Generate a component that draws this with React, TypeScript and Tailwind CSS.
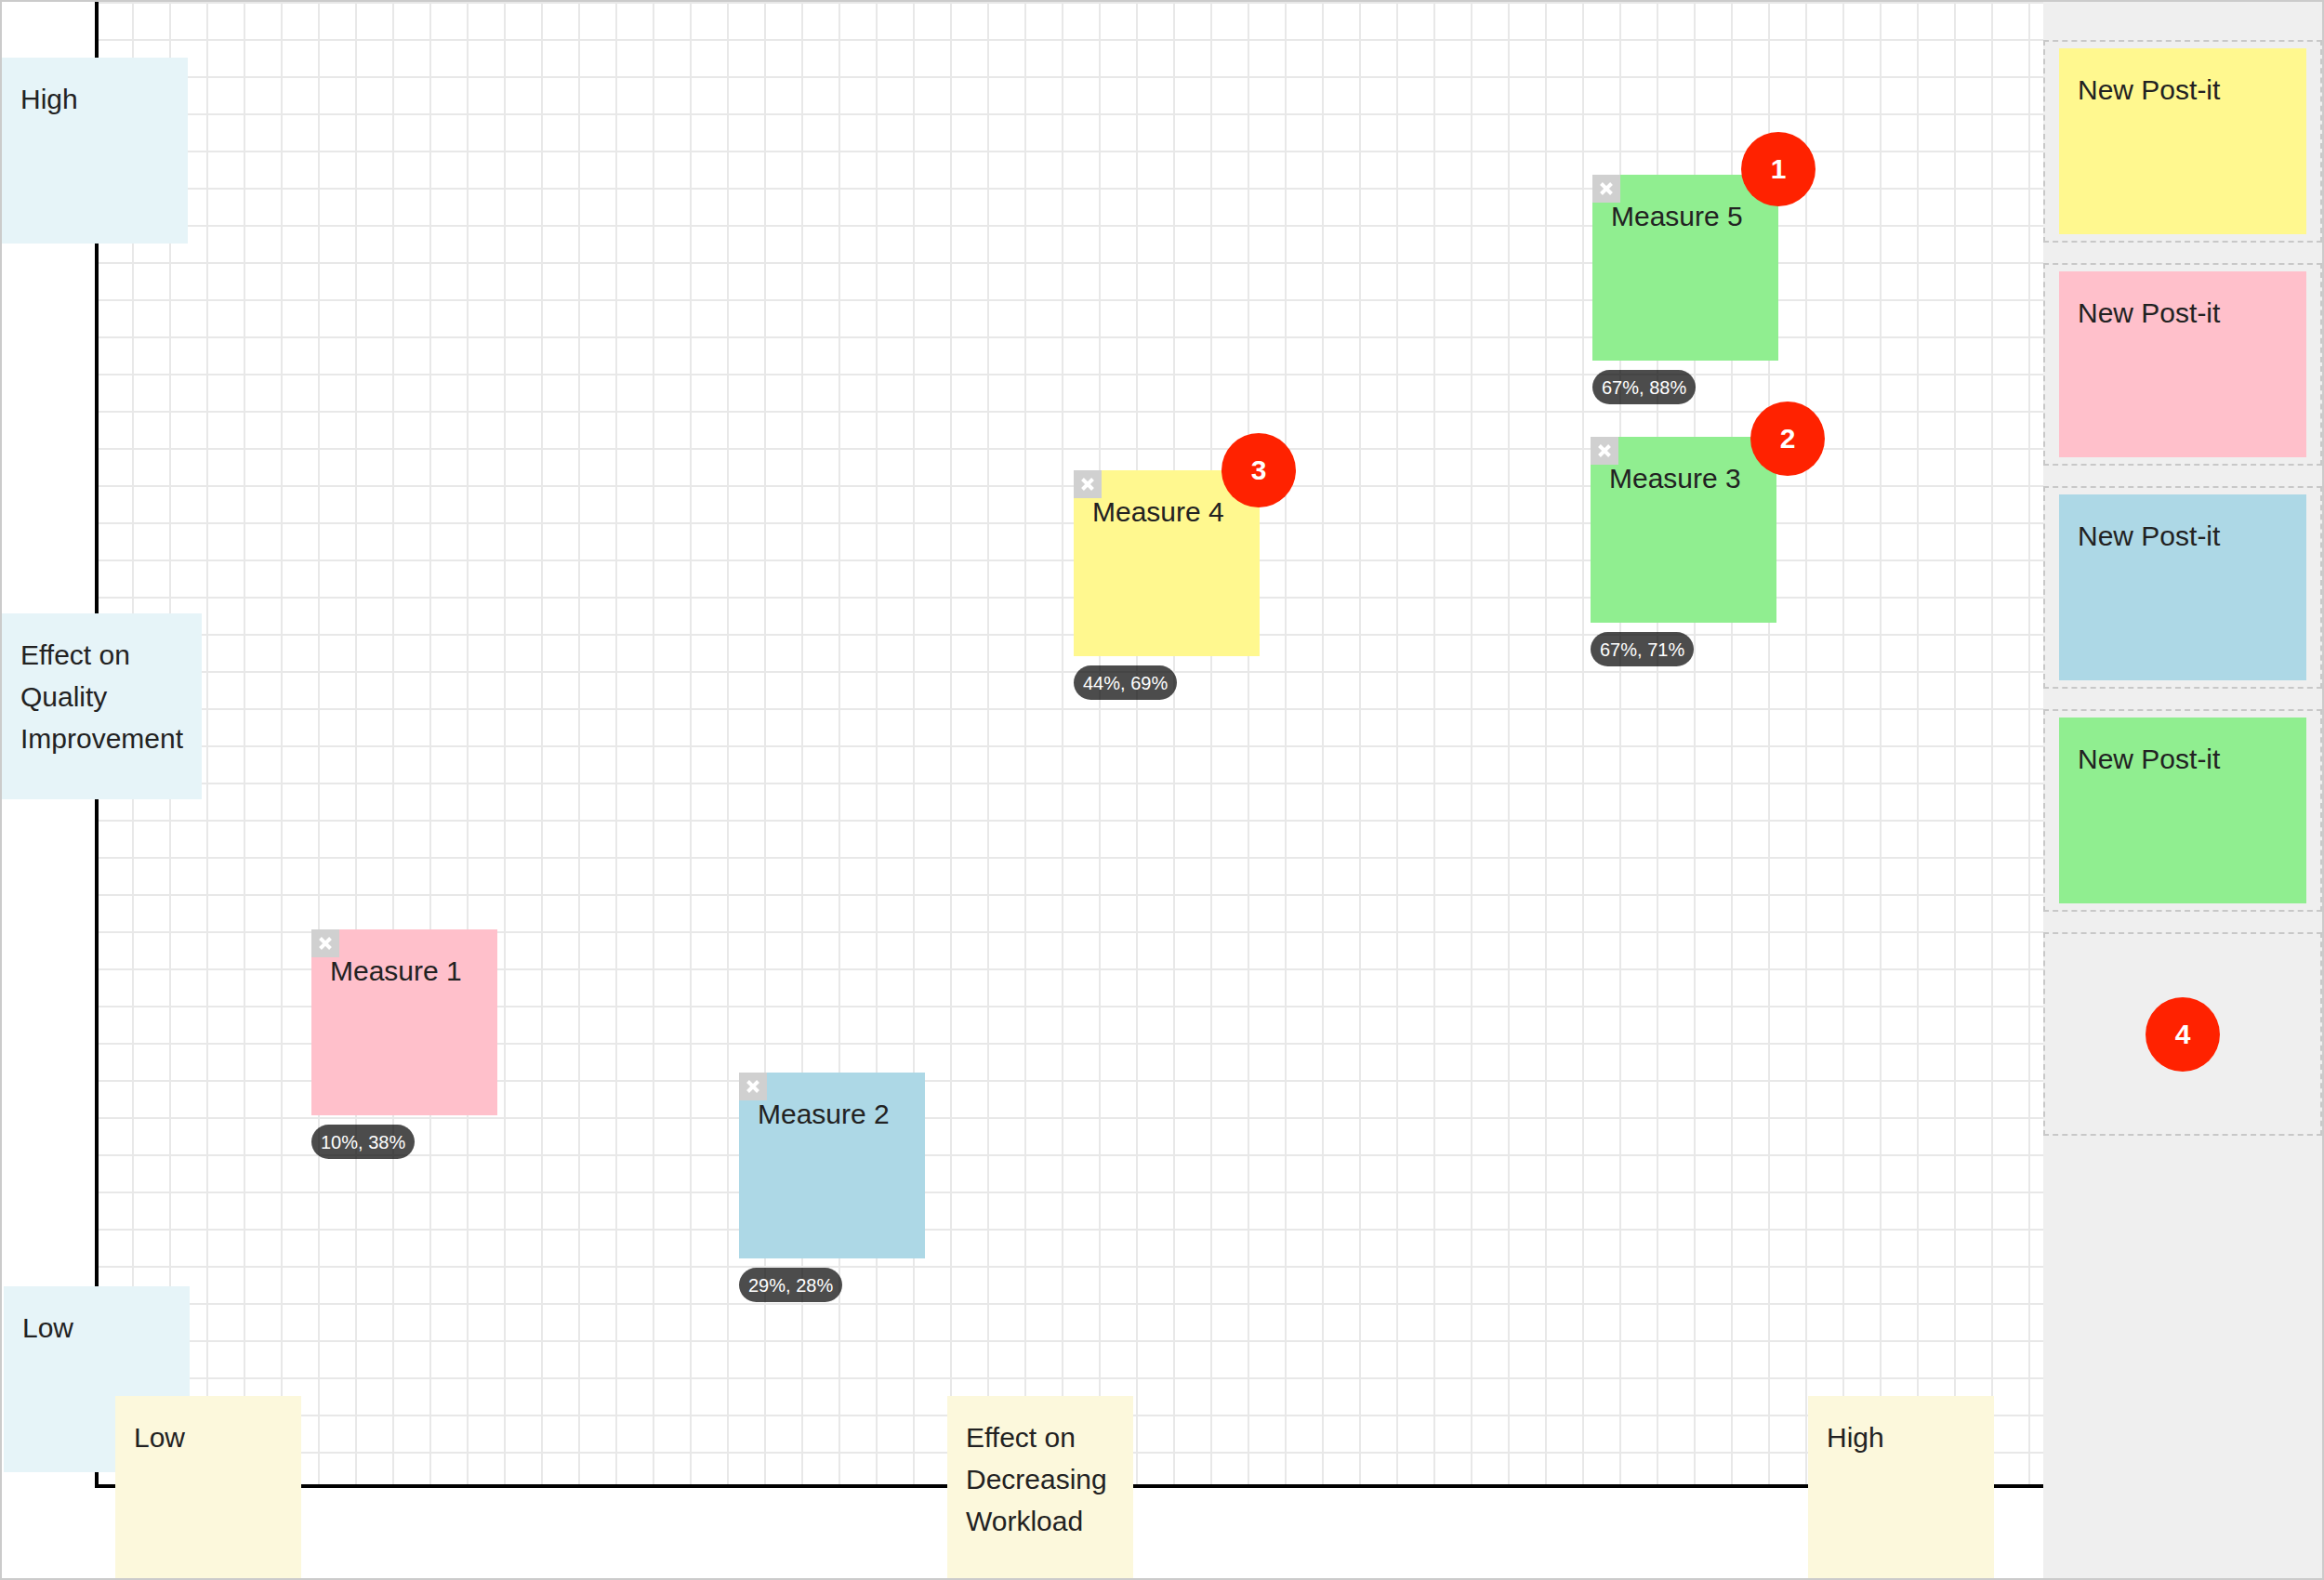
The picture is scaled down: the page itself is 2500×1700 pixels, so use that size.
type Measure = {
  label: string;
  value: string;
  bg: string;
  pos: string;
};

const measures: Measure[] = [
  { label: "Measure 1", value: "10%, 38%", bg: "bg-[#ffc0cb]", pos: "left-[333px] top-[998px]" },
  { label: "Measure 2", value: "29%, 28%", bg: "bg-[#add8e6]", pos: "left-[793px] top-[1152px]" },
  { label: "Measure 4", value: "44%, 69%", bg: "bg-[#fff88f]", pos: "left-[1153px] top-[504px]" },
  { label: "Measure 3", value: "67%, 71%", bg: "bg-[#90ee90]", pos: "left-[1709px] top-[468px]" },
  { label: "Measure 5", value: "67%, 88%", bg: "bg-[#90ee90]", pos: "left-[1711px] top-[186px]" },
];

const ranks = [
  { n: 1, pos: "left-[1871px] top-[140px]" },
  { n: 2, pos: "left-[1881px] top-[430px]" },
  { n: 3, pos: "left-[1312px] top-[464px]" },
];

const axisLabels = [
  { lines: ["High"], cls: "left-0 top-[60px] w-[200px] bg-[#e6f4f8]" },
  { lines: ["Effect on", "Quality", "Improvement"], cls: "left-0 top-[658px] w-[215px] bg-[#e6f4f8]" },
  { lines: ["Low"], cls: "left-[2px] top-[1382px] w-[200px] bg-[#e6f4f8]" },
  { lines: ["Low"], cls: "left-[122px] top-[1500px] w-[200px] bg-[#fcf8dc]" },
  { lines: ["Effect on", "Decreasing", "Workload"], cls: "left-[1017px] top-[1500px] w-[200px] bg-[#fcf8dc]" },
  { lines: ["High"], cls: "left-[1943px] top-[1500px] w-[200px] bg-[#fcf8dc]" },
];

const palette = ["bg-[#fff88f]", "bg-[#ffc0cb]", "bg-[#add8e6]", "bg-[#90ee90]"];

function Rank({ n, className = "" }: { n: number; className?: string }) {
  return (
    <div
      className={`flex size-[80px] items-center justify-center rounded-full bg-[#ff2200] text-[30px] font-bold leading-none text-white ${className}`}
    >
      {n}
    </div>
  );
}

function CloseButton() {
  return (
    <div className="absolute left-0 top-0 flex size-[30px] items-center justify-center bg-[#d0d0d0]">
      <svg width="16" height="16" viewBox="0 0 16 16">
        <path d="M2.5 2.5 L13.5 13.5 M13.5 2.5 L2.5 13.5" stroke="#fff" strokeWidth="4" />
      </svg>
    </div>
  );
}

function StickyNote({ m }: { m: Measure }) {
  return (
    <div className={`absolute flex flex-col items-start ${m.pos}`}>
      <div className={`relative h-[200px] w-[200px] px-[20px] pt-[22px] ${m.bg}`}>
        <CloseButton />
        <p>{m.label}</p>
      </div>
      <span className="mt-[10px] rounded-full bg-black/70 px-[10px] pb-[3px] pt-[5px] text-[20px] leading-[29px] text-white">
        {m.value}
      </span>
    </div>
  );
}

export default function App() {
  return (
    <div className="relative flex h-[1700px] w-[2500px] overflow-hidden border-2 border-[#cbcbcb] bg-white font-['Liberation_Sans',Arial,sans-serif] text-[30px] leading-[45px] text-[#222]">
      {/* plot area */}
      <div className="flex-1 pb-[97px] pl-[100px]">
        <div className="h-full border-b-4 border-l-4 border-black bg-[linear-gradient(to_right,#e8e8e8_2px,transparent_2px),linear-gradient(to_bottom,#e8e8e8_2px,transparent_2px)] bg-size-[40px_40px] bg-origin-border" />
      </div>

      {/* palette */}
      <aside className="flex w-[300px] flex-col gap-[22px] bg-[#efefef] pt-[41px]">
        {palette.map((bg, i) => (
          <div key={i} className="border-2 border-dashed border-[#c8c8c8] px-[15px] py-[7px]">
            <div className={`h-[200px] px-[20px] pt-[22px] ${bg}`}>New Post-it</div>
          </div>
        ))}
        <div className="flex h-[219px] items-center justify-center border-2 border-dashed border-[#c8c8c8]">
          <Rank n={4} />
        </div>
      </aside>

      {axisLabels.map((l, i) => (
        <div key={i} className={`absolute h-[200px] px-[20px] pt-[22px] ${l.cls}`}>
          {l.lines.map((t) => (
            <p key={t}>{t}</p>
          ))}
        </div>
      ))}

      {measures.map((m) => (
        <StickyNote key={m.label} m={m} />
      ))}

      {ranks.map((r) => (
        <Rank key={r.n} n={r.n} className={`absolute ${r.pos}`} />
      ))}
    </div>
  );
}
